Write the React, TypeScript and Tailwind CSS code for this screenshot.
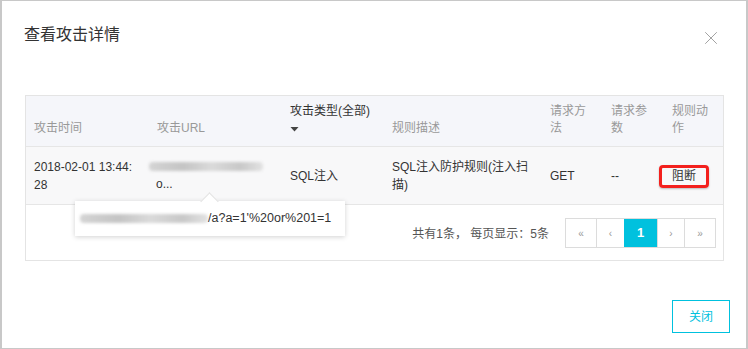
import { X } from "lucide-react";

const font = "font-['Liberation_Sans','Noto_Sans_CJK_SC',sans-serif]";

const cols = "grid grid-cols-[123px_133px_102px_158px_61px_61px_1fr]";

const Blur = ({ w }: { w: number }) => (
  <div
    className="h-[9px] rounded-sm bg-[linear-gradient(90deg,#d4d4d4,#c4c4c4_30%,#dadada_55%,#c8c8c8_80%,#e2e2e2)] blur-[1.5px]"
    style={{ width: w }}
  />
);

const App = () => {
  return (
    <div
      className={`${font} relative flex h-[349px] w-[748px] flex-col border-x-2 border-y border-[#c8c8c8] bg-white`}
    >
      <div className="flex items-start justify-between pl-[22px] pr-[24px] pt-[22px]">
        <h1 className="text-[16px] leading-[24px] text-[#333]">查看攻击详情</h1>
        <X size={22} strokeWidth={1} className="mt-[4px] text-[#999]" />
      </div>

      <div className="relative ml-[23px] mr-[22px] mt-[46px] border border-[#e4e4e4] text-[12px]">
        <div
          className={`${cols} h-[51px] border-b border-[#e6e6e6] bg-[#f5f6fa] leading-[17px] text-[#999]`}
        >
          <div className="flex items-end px-2 pb-[9px]">攻击时间</div>
          <div className="flex items-end px-2 pb-[9px]">攻击URL</div>
          <div className="flex flex-col justify-end px-2 pb-[9px] text-[#333]">
            <span>攻击类型(全部)</span>
            <svg width="9" height="17" viewBox="0 0 9 17">
              <path d="M0.5 7 L8.5 7 L4.5 11.5 Z" fill="#444" />
            </svg>
          </div>
          <div className="flex items-end px-2 pb-[9px]">规则描述</div>
          <div className="flex items-end px-2 pb-[9px]">
            请求方
            <br />法
          </div>
          <div className="flex items-end px-2 pb-[9px]">
            请求参
            <br />数
          </div>
          <div className="flex items-end px-2 pb-[9px]">
            规则动
            <br />作
          </div>
        </div>

        <div
          className={`${cols} h-[58px] border-b border-[#e6e6e6] bg-[#f8f8f9] leading-[18px] text-[#333]`}
        >
          <div className="flex items-center px-2">
            <span>
              2018-02-01 13:44:
              <br />
              28
            </span>
          </div>
          <div className="flex flex-col justify-center gap-[6px] px-2 pt-[2px]">
            <div className="-ml-[8px]">
              <Blur w={114} />
            </div>
            <span className="-ml-[1px] leading-[14px]">o...</span>
          </div>
          <div className="flex items-center px-2">SQL注入</div>
          <div className="flex items-center px-2">
            <span>
              SQL注入防护规则(注入扫
              <br />
              描)
            </span>
          </div>
          <div className="flex items-center px-2">GET</div>
          <div className="flex items-center px-2">--</div>
          <div className="flex items-center px-2">
            <span className="-ml-[13px] mt-[1px] inline-flex h-[23px] items-center rounded-[4px] border-[3px] border-[#f3201d] px-[10px] shadow-[0_1px_2px_rgba(0,0,0,0.25)]">
              阻断
            </span>
          </div>
        </div>

        <div className="flex h-[55px] items-start justify-end pr-[7px] pt-[13px]">
          <span className="mr-[16px] mt-[7px] text-[#555]">共有1条， 每页显示：5条</span>
          <div className="flex h-[30px] border border-[#dcdcdc] text-[10px] text-[#999]">
            <span className="flex w-[30px] items-center justify-center">«</span>
            <span className="flex w-[28px] items-center justify-center border-l border-[#dcdcdc]">‹</span>
            <span className="flex w-[33px] items-center justify-center bg-[#00c1de] text-[13px] font-bold text-white">
              1
            </span>
            <span className="flex w-[27px] items-center justify-center border-l border-[#dcdcdc]">›</span>
            <span className="flex w-[31px] items-center justify-center border-l border-[#dcdcdc]">»</span>
          </div>
        </div>

        {/* url tooltip */}
        <div className="absolute left-[49px] top-[105px] flex h-[35px] w-[270px] items-center bg-white pl-[5px] shadow-[0_1px_5px_rgba(0,0,0,0.18)]">
          <div className="absolute left-[128px] top-[-6px] h-[13px] w-[13px] rotate-45 border-l border-t border-[#e2e2e2] bg-white" />
          <Blur w={128} />
          <span className="relative text-[12.5px] text-[#333]">/a?a=1'%20or%201=1</span>
        </div>
      </div>

      <div className="mt-[39px] flex justify-end pr-[16px]">
        <button className="h-[33px] w-[58px] border border-[#00c1de] text-[12px] text-[#00c1de]">
          关闭
        </button>
      </div>
    </div>
  );
};

export default App;
